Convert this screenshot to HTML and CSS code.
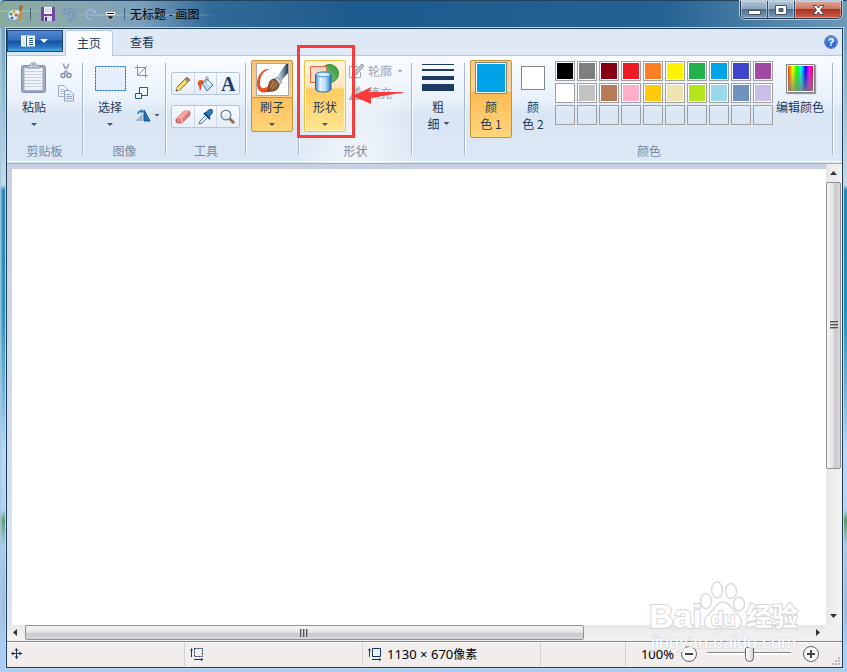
FILE: index.html
```html
<!DOCTYPE html>
<html lang="zh-CN">
<head>
<meta charset="utf-8">
<title>无标题 - 画图</title>
<link rel="stylesheet" href="styles.css">
</head>
<body>
<div class="window">
  <header class="titlebar">
    <svg class="app-icon" width="17" height="18" viewBox="0 0 17 18"><path d="M1 9C2 5 7 3 12 5C14 6 14 9 11 10C10 11 12 13 9 15C5 17 0 14 1 9Z" fill="#dceaf5" stroke="#6d9dbc"/><circle cx="4" cy="9" r="1.5" fill="#3b9d45"/><circle cx="7" cy="6.500" r="1.500" fill="#d8a51c"/><circle cx="5" cy="13" r="1.500" fill="#2e75c8"/><circle cx="9" cy="10" r="1.500" fill="#db5030"/><path d="M13 6L12 15L15 16L15 6Z" fill="#e98522"/><path d="M12 1L16 0L15 6H12Z" fill="#b56c35"/></svg>
    <span class="title-sep"></span>
    <button class="quick save" aria-label="保存"><svg width="14" height="14" viewBox="0 0 14 14"><path d="M0 0H14V14H1L0 13Z" fill="#7446a6"/><path d="M3 0H11V7H3Z" fill="#f4f6fc"/><path d="M3 9H11V14H3Z" fill="#d9dcef"/><path d="M4 10H6V14H4Z" fill="#513080"/><path d="M4 2H10M4 4H10" stroke="#b8c4dd"/></svg></button>
    <button class="quick undo" aria-label="撤消"><svg width="14" height="14" viewBox="0 0 14 14"><path d="M1 1V7H7L5 5C8 3 11 5 10 8C10 10 8 12 5 12V14C10 14 13 11 13 7C13 2 7 0 3 3Z" fill="#8aa6c4" stroke="#6688ad" stroke-width=".8"/></svg></button>
    <button class="quick redo" aria-label="重做"><svg width="14" height="14" viewBox="0 0 14 14"><path d="M13 1V7H7L9 5C6 3 3 5 4 8C4 10 6 12 9 12V14C4 14 1 11 1 7C1 2 7 0 11 3Z" fill="#9db5d1" stroke="#7f9dbf" stroke-width=".8"/></svg></button>
    <button class="quick more" aria-label="自定义快速访问工具栏"><svg width="9" height="8" viewBox="0 0 9 8"><path d="M0 0H9V3H0Z" fill="#fff"/><path d="M1 1.500H8" stroke="#111"/><path d="M1 4H8L4.500 7.500Z" fill="#111" stroke="#fff" stroke-width=".4"/></svg></button>
    <span class="title-sep"></span>
    <h1 class="title">无标题 - 画图</h1>
    <div class="caption-buttons">
      <button class="caption minimize" aria-label="最小化"><svg width="13" height="5" viewBox="0 0 13 5"><path d="M.5.5H12.500V4.500H.5Z" fill="#fff" stroke="#47566b"/></svg></button>
      <button class="caption maximize" aria-label="最大化"><svg width="12" height="10" viewBox="0 0 12 10"><path d="M.5.5H11.500V9.500H.5ZM4 3.500V6.500H8V3.500Z" fill="#fff" fill-rule="evenodd" stroke="#47566b"/></svg></button>
      <button class="caption close" aria-label="关闭"><svg width="13" height="10" viewBox="0 0 13 10"><path d="M1 .5H4.500L6.500 3L8.500.5H12L8.500 5L12 9.500H8.500L6.500 7L4.500 9.500H1L4.500 5Z" fill="#fff" stroke="#58474f"/></svg></button>
    </div>
  </header>

  <main class="client">
    <nav class="tabs">
      <button class="file-button" aria-label="画图菜单"><svg width="28" height="12" viewBox="0 0 28 12"><path d="M0 .5H14V11.500H0Z" fill="#fff"/><path d="M5.500 1V11" stroke="#2b65b2"/><path d="M8 3.500H12M8 5.500H12M8 7.500H12M8 9.500H12" stroke="#235ba9"/><path d="M1 2H4V10H1Z" fill="#dbe8f8"/><path d="M19 4H27L23 8Z" fill="#fff"/></svg></button>
      <button class="tab active">主页</button>
      <button class="tab">查看</button>
      <button class="help" aria-label="帮助">?</button>
    </nav>

    <div class="ribbon">
      <section class="group clipboard">
        <div class="tools-row">
          <button class="big"><span class="art"><svg width="26" height="32" viewBox="0 0 26 32"><rect x=".5" y="3.500" width="24" height="27" rx="2" fill="#9ba8bf" stroke="#8391ad"/><path d="M3.500 6H21.500V28H3.500Z" fill="#f0f4fa"/><path d="M4 9.500H21M4 12.500H21M4 15.500H21M4 18.500H21M4 21.500H21M4 24.500H21" stroke="#c4cfdf"/><path d="M6 6V3.500H9C9 0 16 0 16 3.500H19V6Z" fill="#c2ccdc" stroke="#8290ab"/><circle cx="12.500" cy="3" r="1" fill="#8290ab"/></svg></span><span>粘贴</span><i class="arrow"></i></button>
          <div class="stack">
            <button aria-label="剪切"><svg width="12" height="16" viewBox="0 0 12 16"><path d="M2 0L4 1L8.500 10L7 11ZM10 0L8 1L3.500 10L5 11Z" fill="#8e9cb6"/><circle cx="3" cy="12.500" r="2" fill="none" stroke="#7f8eab" stroke-width="1.500"/><circle cx="9" cy="12.500" r="2" fill="none" stroke="#7f8eab" stroke-width="1.500"/></svg></button>
            <button aria-label="复制"><svg width="16" height="17" viewBox="0 0 16 17"><path d="M.5.5H6L9.500 4V11.500H.5Z" fill="#eef3fa" stroke="#a1afc6"/><path d="M2 4.500H6M2 6.500H6M2 8.500H6" stroke="#b5c2d5"/><path d="M6.500 5.500H11.500L15.500 9V16H6.500Z" fill="#e6edf7" stroke="#8e9dba"/><path d="M8 9.500H12M8 11.500H14M8 13.500H14" stroke="#9cabc3"/></svg></button>
          </div>
        </div>
        <h2>剪贴板</h2>
      </section>
      <span class="sep"></span>

      <section class="group image">
        <div class="tools-row">
          <button class="big"><span class="art"><svg width="31" height="25" viewBox="0 0 31 25"><rect x=".5" y=".5" width="30" height="24" fill="#dceafa" fill-opacity=".6" stroke="#0a62a9" stroke-dasharray="2 1"/></svg></span><span>选择</span><i class="arrow"></i></button>
          <div class="stack">
            <button aria-label="裁剪"><svg width="13" height="13" viewBox="0 0 13 13"><path d="M2.500 0V10.500H13M0 2.500H10.500V13" fill="none" stroke="#8593ad"/><path d="M3 10L12 1" stroke="#8593ad"/></svg></button>
            <button aria-label="重新调整大小"><svg width="14" height="13" viewBox="0 0 14 13"><path d="M4.500.5H12.500V8.500H4.500Z" fill="#f8fcff" stroke="#145c96"/><path d="M.5 6.500H6.500V11.500H.5Z" fill="#e3f4ff" stroke="#145c96"/></svg></button>
            <button class="rotate" aria-label="旋转"><svg width="17" height="13" viewBox="0 0 17 13"><path d="M0 12L7.500 5V12Z" fill="#a5b2c2"/><path d="M9 1V12H15Z" fill="#1b75b7" stroke="#17558d"/><path d="M3 5C3 2 5 2 7 2.500" fill="none" stroke="#1c7ed0" stroke-width="1.500"/><path d="M6 0L9 3L5 4Z" fill="#1c7ed0"/></svg><i class="arrow"></i></button>
          </div>
        </div>
        <h2>图像</h2>
      </section>
      <span class="sep"></span>

      <section class="group tools">
        <div class="tool-rows">
          <div class="tool-bar">
            <button aria-label="铅笔"><svg width="16" height="16" viewBox="0 0 16 16"><path d="M1 15L2 11L11 2L14 5L5 14Z" fill="#f1cf4b" stroke="#806029" stroke-width=".8"/><path d="M11 2L12 1L15 4L14 5Z" fill="#d66265" stroke="#954d50" stroke-width=".6"/><path d="M10 3L13 6" stroke="#5aa46a" stroke-width="1.200"/><path d="M1 15L2 11L5 14Z" fill="#faedc8"/><path d="M1 15L1.500 13L3 14.500Z" fill="#222"/><path d="M4 12L11 5" stroke="#fff0a0"/></svg></button>
            <button aria-label="用颜色填充"><svg width="17" height="16" viewBox="0 0 17 16"><path d="M5 7L10 3L16 9L10 15Z" fill="#bfdcef" stroke="#477ca5"/><path d="M7 7L10 4L14 8L12 9Z" fill="#f6fbff"/><path d="M9 8V2C9 0 11 0 11 2V5" fill="none" stroke="#6f91ad"/><path d="M7 5C2 2 0 6 1 9C3 11 2 12 3 15C6 11 3 8 7 7Z" fill="#e35526"/></svg></button>
            <button class="letter" aria-label="文本">A</button>
          </div>
          <div class="tool-bar">
            <button aria-label="橡皮擦"><svg width="16" height="14" viewBox="0 0 16 14"><path d="M1 9L9 1H14L15 2V5L7 13H2L1 12Z" fill="#e0797a" stroke="#ad5358" stroke-width=".7"/><path d="M1 9L9 1H14L7 9Z" fill="#f2aaa8"/><path d="M7 9L7 13" stroke="#ffd5d2"/></svg></button>
            <button aria-label="颜色选取器"><svg width="15" height="16" viewBox="0 0 15 16"><path d="M1 15L2 12L8 6L10 8L4 14Z" fill="#dceefa" stroke="#48637d" stroke-width=".8"/><path d="M7 4L11 1C14-1 16 2 14 4L11 8Z" fill="#287ac2" stroke="#154e8a"/><path d="M6 4L12 10" stroke="#174c82" stroke-width="2"/></svg></button>
            <button aria-label="放大镜"><svg width="16" height="16" viewBox="0 0 16 16"><path d="M9 9L14 14" stroke="#9c6a39" stroke-width="3"/><circle cx="6" cy="6" r="4.800" fill="#e1f2fc" stroke="#77889b" stroke-width="1.500"/><path d="M3 6C3 4 5 3 7 3" fill="none" stroke="#fff" stroke-width="1.500"/></svg></button>
          </div>
        </div>
        <h2>工具</h2>
      </section>
      <span class="sep"></span>

      <section class="group brushes">
        <button class="big lit"><span class="art"><svg width="33" height="33" viewBox="0 0 33 33"><defs><linearGradient id="handle" x2="1"><stop stop-color="#ecf1f6"/><stop offset=".5" stop-color="#8d9eaf"/><stop offset="1" stop-color="#243c55"/></linearGradient></defs><path d="M.5.5H32.500V32.500H.5Z" fill="#fff" stroke="#a8a8a8"/><path d="M20 15L30 1H32V10L24 19Z" fill="url(#handle)"/><path d="M18 17L21 14L26 19L23 22Z" fill="#c8d2dc" stroke="#64778a" stroke-width=".7"/><path d="M12 6C6 6 1 13 1 21C1 31 10 31 16 27L13 22C8 27 4 26 4 20C4 13 7 8 14 6Z" fill="#e65125"/><path d="M13 27C12 20 14 16 19 16L23 21C23 27 18 29 11 28Z" fill="#925d35" stroke="#683a22"/><path d="M16 26L21 20M14 25L18 18" stroke="#c29056"/></svg></span><span>刷子</span><i class="arrow"></i></button>
      </section>
      <span class="sep"></span>

      <section class="group shapes">
        <div class="tools-row">
          <button class="big hot"><span class="art"><svg width="30" height="29" viewBox="0 0 30 29"><defs><linearGradient id="cylinder" x2="1"><stop stop-color="#3c88d1"/><stop offset=".3" stop-color="#e3f5ff"/><stop offset=".65" stop-color="#b4dcf8"/><stop offset="1" stop-color="#2673be"/></linearGradient><linearGradient id="ball" x1="1" x2="0" y2="1"><stop stop-color="#30943a"/><stop offset="1" stop-color="#8bd286"/></linearGradient></defs><circle cx="19.500" cy="9.500" r="9" fill="url(#ball)" stroke="#318b3a"/><path d="M.5 2.500H16.500V18.500H.5Z" fill="#fbd9c8" stroke="#e26b3d"/><path d="M5.500 11C5.500 7 21 7 21 11V25C21 29 5.500 29 5.500 25Z" fill="url(#cylinder)" stroke="#2469ad"/><ellipse cx="13.250" cy="10.500" rx="7" ry="2.300" fill="#d7efff" stroke="#5291c8"/></svg></span><span>形状</span><i class="arrow"></i></button>
          <div class="options">
            <button><svg width="16" height="15" viewBox="0 0 16 15"><path d="M9 2.500H.5V13.500H11.500V8" fill="none" stroke="#a4abb6"/><path d="M4 12L5 8L13 0L15 2L8 10Z" fill="#c3c8cf" stroke="#949ba6"/></svg><span>轮廓</span><i class="arrow"></i></button>
            <button><svg width="16" height="15" viewBox="0 0 16 15"><path d="M3 7L9 2L14 8L9 13Z" fill="#d0d5dc" stroke="#a4abb5"/><path d="M8 8V2C8 0 11 0 11 3" fill="none" stroke="#a4abb5"/><path d="M0 14L3 7L6 14Z" fill="#aab1bc"/><path d="M0 13H14" stroke="#adb4be" stroke-width="2"/></svg><span>填充</span><i class="arrow"></i></button>
          </div>
        </div>
        <h2>形状</h2>
        <div class="highlight"></div>
        <svg class="pointer" width="54" height="18" viewBox="0 0 54 18"><path d="M0 9L18 0L16 5L53 5L18 11L18 17Z" fill="#fb3a3c"/></svg>
      </section>
      <span class="sep"></span>

      <section class="group thickness">
        <button class="big"><span class="art"><svg width="32" height="28" viewBox="0 0 32 28"><path d="M0 0H32V1H0ZM0 5H32V7H0ZM0 12H32V16H0ZM0 20H32V27H0Z" fill="#1c3a62"/></svg></span><span>粗</span><span class="with-arrow">细<i class="arrow"></i></span></button>
      </section>
      <span class="sep"></span>

      <section class="group colors">
        <div class="tools-row">
          <button class="big color-one"><span class="art"><i class="chip primary"></i></span><span>颜</span><span>色 1</span></button>
          <button class="big color-two"><span class="art"><i class="chip secondary"></i></span><span>颜</span><span>色 2</span></button>
          <div class="palette">
            <button class="swatch black" aria-label="黑色"></button><button class="swatch gray" aria-label="灰色-50%"></button><button class="swatch maroon" aria-label="深红色"></button><button class="swatch red" aria-label="红色"></button><button class="swatch orange" aria-label="橙色"></button><button class="swatch yellow" aria-label="黄色"></button><button class="swatch green" aria-label="绿色"></button><button class="swatch turquoise" aria-label="青绿"></button><button class="swatch indigo" aria-label="靛蓝"></button><button class="swatch purple" aria-label="紫色"></button>
            <button class="swatch white" aria-label="白色"></button><button class="swatch silver" aria-label="灰色-25%"></button><button class="swatch brown" aria-label="褐色"></button><button class="swatch rose" aria-label="玫瑰色"></button><button class="swatch gold" aria-label="金色"></button><button class="swatch cream" aria-label="浅黄色"></button><button class="swatch lime" aria-label="酸橙色"></button><button class="swatch aqua" aria-label="淡青绿色"></button><button class="swatch slate" aria-label="蓝灰色"></button><button class="swatch lavender" aria-label="淡紫色"></button>
            <button class="swatch" aria-label="自定义 1"></button><button class="swatch" aria-label="自定义 2"></button><button class="swatch" aria-label="自定义 3"></button><button class="swatch" aria-label="自定义 4"></button><button class="swatch" aria-label="自定义 5"></button><button class="swatch" aria-label="自定义 6"></button><button class="swatch" aria-label="自定义 7"></button><button class="swatch" aria-label="自定义 8"></button><button class="swatch" aria-label="自定义 9"></button><button class="swatch" aria-label="自定义 10"></button>
          </div>
          <button class="big edit"><span class="art"><i class="spectrum"></i></span><span>编辑颜色</span></button>
        </div>
        <h2>颜色</h2>
      </section>
      <span class="sep"></span>
    </div>

    <div class="workspace">
      <div class="desk"><div class="canvas"></div></div>
      <div class="scroll vertical">
        <button aria-label="向上滚动"><svg width="7" height="4" viewBox="0 0 7 4"><path d="M0 4L3.500 0L7 4Z" fill="#333"/></svg></button>
        <div class="track"><div class="thumb"><i class="ridges"></i></div></div>
        <button aria-label="向下滚动"><svg width="7" height="4" viewBox="0 0 7 4"><path d="M0 0H7L3.500 4Z" fill="#333"/></svg></button>
      </div>
      <div class="scroll horizontal">
        <button aria-label="向左滚动"><svg width="4" height="7" viewBox="0 0 4 7"><path d="M4 0V7L0 3.500Z" fill="#333"/></svg></button>
        <div class="track"><div class="thumb"><i class="ridges"></i></div></div>
        <button aria-label="向右滚动"><svg width="4" height="7" viewBox="0 0 4 7"><path d="M0 0L4 3.500L0 7Z" fill="#333"/></svg></button>
      </div>
    </div>

    <footer class="status">
      <div class="cell"><svg width="12" height="12" viewBox="0 0 12 12"><path d="M5.500 1V11M1 5.500H11" stroke="#18345e"/><path d="M3.500 2.500L5.500 0L7.500 2.500ZM3.500 8.500L5.500 11L7.500 8.500ZM2.500 3.500L0 5.500L2.500 7.500ZM8.500 3.500L11 5.500L8.500 7.500Z" fill="#18345e"/></svg></div>
      <div class="cell"><svg width="14" height="13" viewBox="0 0 14 13"><path d="M4.500.5H12.500V8.500H4.500Z" fill="none" stroke="#18345e" stroke-dasharray="2 1"/><path d="M1.500 2V9M4 11.500H12" stroke="#18345e"/><path d="M0 2.500L1.500 0L3 2.500ZM11 10L13.500 11.500L11 13Z" fill="#18345e"/></svg></div>
      <div class="cell"><svg width="14" height="13" viewBox="0 0 14 13"><path d="M4.500.5H12.500V8.500H4.500Z" fill="#e8f5fd" stroke="#18345e"/><path d="M1.500 2V9M4 11.500H12" stroke="#18345e"/><path d="M0 2.500L1.500 0L3 2.500ZM11 10L13.500 11.500L11 13Z" fill="#18345e"/></svg><span><span class="digits">1130 × 670</span>像素</span></div>
      <div class="cell"></div>
      <div class="zoom">
        <label class="digits" for="zoom">100%</label>
        <button aria-label="缩小"><svg width="16" height="16" viewBox="0 0 16 16"><circle cx="8" cy="8" r="7.500" fill="#fafafa" stroke="#606060"/><path d="M4 8H12" stroke="#444" stroke-width="2"/></svg></button>
        <input id="zoom" type="range" min="0" max="100" value="50">
        <button aria-label="放大"><svg width="16" height="16" viewBox="0 0 16 16"><circle cx="8" cy="8" r="7.500" fill="#fafafa" stroke="#606060"/><path d="M4 8H12M8 4V12" stroke="#444" stroke-width="2"/></svg></button>
      </div>
      <svg class="grip" width="9" height="9" viewBox="0 0 9 9"><path d="M6 0H8V2H6ZM3 3H5V5H3ZM6 3H8V5H6ZM0 6H2V8H0ZM3 6H5V8H3ZM6 6H8V8H6Z" fill="#b8b8b8"/></svg>
    </footer>
  </main>

  <div class="watermark">
    <svg class="mark" width="152" height="72" viewBox="0 0 152 72">
      <g fill="#fff" stroke="#d6d6d6" stroke-width="1.500">
        <ellipse cx="57" cy="19" rx="5.500" ry="7.500"/><ellipse cx="68" cy="8" rx="5.500" ry="8"/><ellipse cx="82" cy="9" rx="5.500" ry="7.500"/><ellipse cx="90" cy="22" rx="5.500" ry="7"/>
        <path d="M74 20C81 20 83 28 89 33C96 39 91 49 83 47C76 46 71 46 65 47C55 48 52 38 60 32C66 27 67 20 74 20Z"/>
      </g>
      <g class="lettering"><text class="brand" x="0" y="46">Bai</text><text class="brand-small" x="62" y="44">du</text><text class="brand-cjk" x="97" y="44">经验</text><text class="address" x="2" y="66">jingyan.baidu.com</text></g>
    </svg>
  </div>
</div>
</body>
</html>
```

FILE: styles.css
```css
* { box-sizing: border-box; }

body {
  margin: 0;
  font: 12px/16px "Noto Sans CJK SC", "Noto Sans", sans-serif;
  color: #1e395b;
}

button {
  margin: 0;
  padding: 0;
  border: 0;
  background: none;
  color: inherit;
  font: inherit;
}

svg { display: block; flex: none; }

h1, h2 { margin: 0; font: inherit; }

.window {
  position: relative;
  display: flex;
  flex-direction: column;
  min-height: 100vh;
  padding: 0 4px 4px 6px;
  background:
    linear-gradient(90deg, #a8cbe2, transparent 3px),
    linear-gradient(#6793b7 0, #8cb5cb 80px, #c4dde8 185px, #2487b8 190px, #1d91bf 310px, #7bb9df 400px, #b8d9fb 450px, #b4d4f7 510px, #5b9b68 520px, #aacbea 545px, #9abddd 610px, #a7cffa 650px);
}

.titlebar {
  display: flex;
  align-items: center;
  height: 28px;
  margin: 0 -4px 0 -6px;
  padding: 0 5px 2px 7px;
  border-top: 1px solid #21415d;
  border-radius: 6px 0 0 0;
  background:
    radial-gradient(ellipse at 16px 10px, #c4e0dcb0, transparent 44px),
    radial-gradient(ellipse at 103px 14px, #bed7f0e0, transparent 42px),
    radial-gradient(ellipse at 165px 14px, #9ab9d0c0, transparent 60px),
    linear-gradient(90deg, #88ab9d 0, #8ba9ac 60px, #7ba0bd 140px, #326a96 210px, #1c5b8d 360px, #236292 660px, #6d98b8 847px);
}

.app-icon { margin-right: 6px; }
.title-sep { width: 1px; height: 12px; background: #47677d; }
.quick { display: flex; align-items: center; justify-content: center; }
.save { margin-left: 10px; }
.undo { margin-left: 8px; }
.redo { margin-left: 7px; }
.more { margin: 4px 9px 0 8px; }
.title { margin-left: 5px; color: #000; }

.caption-buttons {
  display: flex;
  align-self: flex-start;
  height: 18px;
  margin-left: auto;
  border: 1px solid #27364a;
  border-top: 0;
  border-radius: 0 0 5px 5px;
  box-shadow: 0 0 0 1px #b5cbdc;
  overflow: hidden;
}

.caption {
  display: flex;
  align-items: center;
  justify-content: center;
  width: 27px;
  border-right: 1px solid #304860;
  background: linear-gradient(#b0c4d5 0, #8aa5bd 48%, #49708f 50%, #7ea0bb);
  box-shadow: inset 0 0 0 1px #ffffff60;
}
.minimize { padding-top: 5px; }
.close { width: 46px; border: 0; background: linear-gradient(#dda79b 0, #c97462 48%, #a93322 50%, #d0604a); }

.client {
  display: flex;
  flex: 1;
  flex-direction: column;
  min-width: 0;
  border: 1px solid #1e3d56;
  box-shadow: 0 0 0 1px #bfd9ea;
}

.tabs {
  display: flex;
  height: 27px;
  padding-top: 1px;
  border-bottom: 1px solid #b6c8dd;
  background: #dfe8f5;
}
.file-button {
  display: flex;
  align-items: center;
  justify-content: center;
  width: 56px;
  height: 22px;
  margin-right: 2px;
  border: 1px solid #1e4587;
  background: linear-gradient(#5289ce 0, #336fc0 45%, #164f9e 50%, #2876c5 80%, #4eaae4);
}
.tab { width: 48px; height: 26px; margin-right: 5px; padding-bottom: 2px; }
.tab.active {
  border: 1px solid #b6c8dd;
  border-bottom: 0;
  border-radius: 3px 3px 0 0;
  background: #f9fcff;
}
.help {
  width: 14px;
  height: 14px;
  margin: 5px 4px 0 auto;
  border: 1px solid #f4f8ff;
  border-radius: 50%;
  outline: 1px solid #5e7fae;
  outline-offset: -1px;
  background: radial-gradient(circle at 50% 30%, #5794f5, #1544bd);
  color: #fff;
  font: bold 11px/12px "Liberation Sans", sans-serif;
}

.ribbon {
  display: flex;
  height: 108px;
  padding-top: 4px;
  border-bottom: 1px solid #a0adc5;
  box-shadow: inset 0 -1px #d4e1ef, inset 0 -2px #fafdff;
  background: linear-gradient(#f9fcff 0, #e9f1fb 40%, #dae6f4 55%, #dce7f5);
}
.sep {
  width: 2px;
  height: 92px;
  margin-top: 3px;
  border-left: 1px solid #a8b7d0;
  border-right: 1px solid #f7faff;
}
.group { position: relative; display: flex; flex-direction: column; }
.group h2 { margin: auto 0 4px; text-align: center; color: #768aa5; }
.tools-row { display: flex; }
.clipboard { width: 75px; }
.image { width: 81px; }
.tools { width: 78px; }
.brushes, .thickness { width: 51px; padding-left: 4px; }
.shapes { width: 111px; background: radial-gradient(ellipse at 50% 100%, #ffffffa0, transparent 85%); }
.colors { width: 366px; }

.big {
  display: flex;
  flex-direction: column;
  align-items: center;
  width: 42px;
  height: 72px;
  padding-top: 1px;
  line-height: 17px;
}
.art { display: flex; align-items: center; justify-content: center; height: 34px; margin-bottom: 3px; }
.arrow {
  width: 6px;
  height: 3px;
  background: #42546e;
  clip-path: polygon(0 0, 100% 0, 50% 100%);
}
.big > .arrow { margin-top: 8px; }
.clipboard .big { margin-left: 6px; }
.image .big { margin-left: 5px; }

.stack { display: flex; flex-direction: column; align-items: flex-start; }
.stack button { display: flex; align-items: center; gap: 2px; height: 22px; }
.clipboard .stack { margin-left: 3px; }
.image .stack { margin-left: 4px; }
.clipboard .stack button { justify-content: center; width: 16px; }

.tool-rows { display: flex; flex-direction: column; gap: 10px; padding: 12px 5px 0 4px; }
.tool-bar {
  display: flex;
  height: 23px;
  border: 1px solid #b5c4da;
  border-radius: 2px;
  background: linear-gradient(#f6faff, #e7eef8);
}
.tool-bar button { display: flex; flex: 1; align-items: center; justify-content: center; }
.tool-bar button + button { border-left: 1px solid #ccd8e8; }
.tool-bar .letter { font: bold 20px/20px "Liberation Serif", serif; color: #203d67; }

.lit, .color-one {
  border: 1px solid #c49332;
  border-radius: 2px;
  background: linear-gradient(#f8cc89 0, #fbd59a 39%, #fcbb54 41%, #ffd67b);
}
.lit { background: linear-gradient(#f4c27e 0, #fbd296 36px, #c49332 36px, #c49332 37px, #fdbf5d 37px, #ffd67b); }
.hot {
  border: 1px solid #efc23e;
  border-radius: 2px;
  box-shadow: inset 0 0 0 1px #fff4c4;
  background: linear-gradient(#fff3df 0, #fde3bd 38%, #fecb61 40%, #ffe78e);
}
.lit, .hot, .color-one { padding-top: 0; }
.lit .art { padding-top: 2px; }
.shapes .big { margin-left: 4px; }

.options { display: flex; flex-direction: column; margin-left: 3px; color: #9aa3af; }
.options button { display: flex; align-items: center; height: 22px; }
.options svg { margin-right: 3px; }
.options .arrow { margin-left: 5px; background: #9ba5b2; }

.highlight {
  position: absolute;
  top: -15px;
  left: -3px;
  width: 58px;
  height: 93px;
  border: 3px solid #fb3a3c;
}
.pointer { position: absolute; top: 27px; left: 53px; }

.with-arrow { display: flex; align-items: center; gap: 4px; padding-left: 1px; }
.colors .big { height: 78px; }
.color-one { margin-left: 4px; }
.chip { border: 1px solid #858585; box-shadow: inset 0 0 0 1px #fff; }
.primary { width: 32px; height: 32px; background: #00a2e8; }
.secondary { width: 24px; height: 24px; background: #fff; }
.palette {
  display: grid;
  grid-template-columns: repeat(10, 20px);
  grid-auto-rows: 20px;
  align-content: start;
  gap: 2px;
  margin: 1px 0 0 1px;
}
.swatch { border: 1px solid #a0a0a0; }
.colors .edit { width: 54px; }
.spectrum {
  width: 29px;
  height: 29px;
  border: 1px solid #858585;
  box-shadow: inset 0 0 0 1px #fff, 1px 1px 1px #99a;
  background: linear-gradient(transparent 10%, #808080d0), linear-gradient(90deg, #f00, #ff0 20%, #0f0 38%, #0ff 52%, #00f 68%, #f0f 82%, #f00);
}

.black, .gray, .maroon, .red, .orange, .yellow, .green, .turquoise, .indigo, .purple,
.white, .silver, .brown, .rose, .gold, .cream, .lime, .aqua, .slate, .lavender { box-shadow: inset 0 0 0 1px #fff; }
.black { background: #000; }
.gray { background: #7f7f7f; }
.maroon { background: #880015; }
.red { background: #ed1c24; }
.orange { background: #ff7f27; }
.yellow { background: #fff200; }
.green { background: #22b14c; }
.turquoise { background: #00a2e8; }
.indigo { background: #3f48cc; }
.purple { background: #a349a4; }
.white { background: #fff; }
.silver { background: #c3c3c3; }
.brown { background: #b97a57; }
.rose { background: #ffaec9; }
.gold { background: #ffc90e; }
.cream { background: #efe4b0; }
.lime { background: #b5e61d; }
.aqua { background: #99d9ea; }
.slate { background: #7092be; }
.lavender { background: #c8bfe7; }

.workspace {
  display: grid;
  flex: 1;
  grid-template: minmax(0, 1fr) 16px / minmax(0, 1fr) 16px;
  background: #f0f0f0;
}
.desk { display: flex; padding: 5px 0 0 5px; background: linear-gradient(#c7d0e3, #dce6f4); }
.canvas { flex: 1; background: #fff; }
.scroll { display: flex; background: linear-gradient(90deg, #e8e8e8, #f3f3f3); }
.scroll button { display: flex; flex: none; align-items: center; justify-content: center; width: 15px; height: 18px; }
.vertical { flex-direction: column; }
.track { display: flex; flex: 1; flex-direction: inherit; }
.thumb { display: flex; align-items: center; justify-content: center; border: 1px solid #929292; border-radius: 2px; }
.vertical .thumb { height: 67.500%; margin-right: 1px; background: linear-gradient(90deg, #f6f6f6, #e6e6e8 45%, #c9c9ce 60%, #d8d8dc); }
.horizontal { height: 16px; background: linear-gradient(#e8e8e8, #f3f3f3); }
.horizontal button { width: 16px; height: 15px; }
.horizontal .thumb { width: 71%; margin: 0 2px 1px; background: linear-gradient(#f6f6f6, #e6e6e8 45%, #c9c9ce 60%, #d8d8dc); }
.ridges { width: 8px; height: 8px; background: repeating-linear-gradient(#555 0, #555 1px, #aaa 1px, #aaa 2px, transparent 2px, transparent 3px); }
.horizontal .ridges { background: repeating-linear-gradient(90deg, #555 0, #555 1px, #aaa 1px, #aaa 2px, transparent 2px, transparent 3px); }

.status {
  display: flex;
  height: 26px;
  padding-bottom: 1px;
  border-top: 1px solid #858585;
  box-shadow: inset 0 1px #fff;
  background: #f0edec;
  color: #000;
}
.cell {
  display: flex;
  align-items: center;
  gap: 5px;
  width: 178px;
  padding-left: 5px;
  border-right: 1px solid #d2d2d2;
}
.cell:first-child { padding-left: 4px; }
.cell:nth-child(4) { width: 85px; }
.digits { font: 13px/16px "Noto Sans", sans-serif; }
.zoom { display: flex; align-items: center; margin-left: auto; }
.zoom input {
  width: 84px;
  height: 16px;
  margin: 0 12px 0 10px;
  appearance: none;
  background: linear-gradient(#888, #888) 0 6px / 100% 1px no-repeat, linear-gradient(#fff, #fff) 0 7px / 100% 2px no-repeat;
}
.zoom input::-webkit-slider-thumb {
  width: 9px;
  height: 15px;
  appearance: none;
  border: 1px solid #656565;
  border-radius: 2px 2px 5px 5px;
  background: linear-gradient(90deg, #fff, #d6d6d6);
}
.zoom label { margin-right: 7px; }
.grip { align-self: flex-end; margin: 0 1px 0 13px; }

.watermark { position: absolute; right: 46px; bottom: 18px; pointer-events: none; }
.mark { overflow: visible; opacity: .85; }
.lettering { fill: #fff; stroke: #d0d0d0; stroke-width: 2px; paint-order: stroke; }
.brand { font: bold 34px "Liberation Sans", sans-serif; }
.brand-small { font: bold 20px "Liberation Sans", sans-serif; }
.brand-cjk { font: bold 26px "Noto Sans CJK SC", sans-serif; }
.address { font: 18px "Liberation Sans", sans-serif; stroke-width: 1px; }
```
